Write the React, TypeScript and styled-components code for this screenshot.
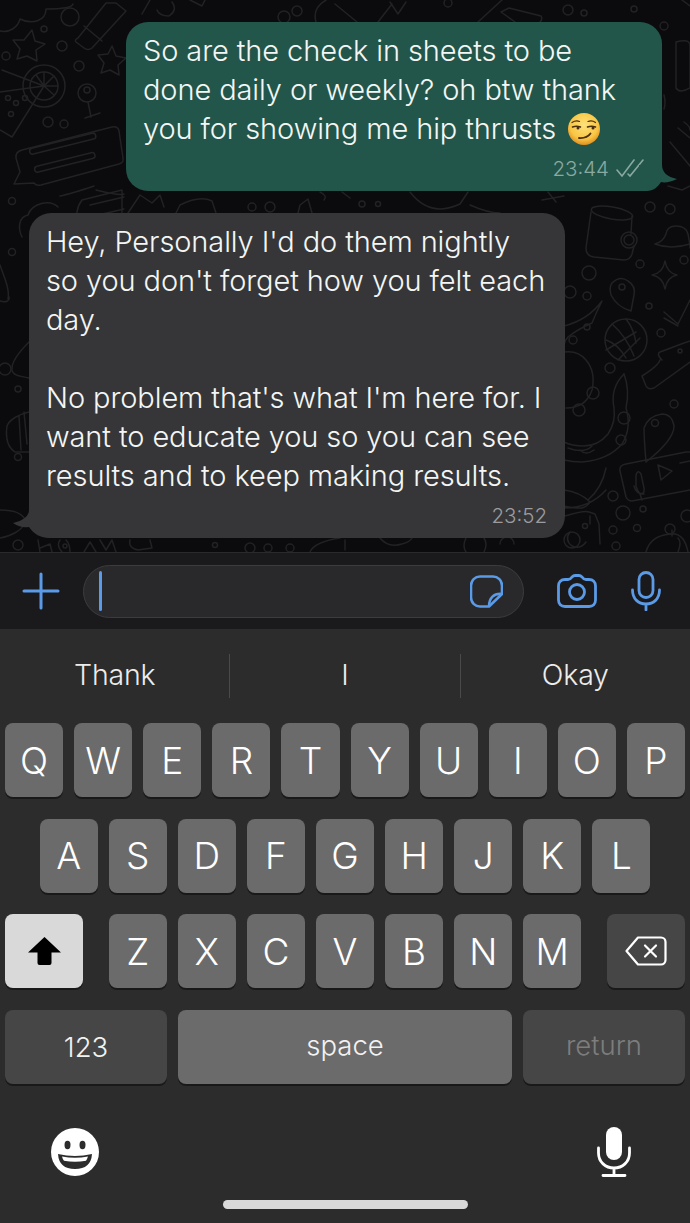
import React from 'react';
import styled, { createGlobalStyle } from 'styled-components';

const GlobalStyle = createGlobalStyle`
  html, body {
    margin: 0;
    padding: 0;
    background: #2c2c2c;
  }
`;

const ROWS = ['QWERTYUIOP', 'ASDFGHJKL', 'ZXCVBNM'];

const Wallpaper = () => (
  <WallpaperSvg viewBox="0 0 690 552">
    <g fill="none" stroke="#222224" strokeWidth="1.5" strokeLinecap="round" strokeLinejoin="round">
      {/* left column */}
      <path d="M0 31c10 2 18-4 20-12 12 6 26 2 26-10 12 0 26-1 27-5" />
      <circle cx="70" cy="17" r="9" />
      <circle cx="44" cy="29" r="3" />
      <circle cx="62" cy="46" r="5" />
      <circle cx="6" cy="56" r="4" />
      <circle cx="79" cy="66" r="5" />
      <path d="M32 30l3 11 10 3-9 6 1 11-10-5-10 3 3-10-7-9 11 0z" />
      <circle cx="44" cy="86" r="21" />
      <circle cx="44" cy="86" r="14" />
      <path d="M44 86V72M44 86l10-10M44 86h14M44 86l10 9M44 86l-8-11" />
      <path d="M2 70l42 16-32 51-12-7M0 92l44-6" />
      <circle cx="8" cy="98" r="2.5" />
      <circle cx="16" cy="103" r="2.5" />
      <circle cx="25" cy="98" r="2.5" />
      <circle cx="11" cy="114" r="2.5" />
      <circle cx="87" cy="93" r="9" />
      <circle cx="87" cy="90" r="3" />
      <path d="M88 102l3 15M85 118l15-5" />
      <circle cx="48" cy="122" r="5" />
      <circle cx="64" cy="124" r="4" />
      <path d="M22 150l90-23q6-1 7 4l4 27q1 5-4 6l-78 21q-5 1-7-2l-20 1 6-12-4-14q-1-6 6-8z" />
      <rect x="29" y="149" width="68" height="6" rx="3" transform="rotate(-14 29 149)" />
      <rect x="34" y="167" width="62" height="6" rx="3" transform="rotate(-14 34 167)" />
      <path d="M78 38l28-35h10l10 8-34 37q-4 3-8 0l-8-6q-2-2 2-4zM84 26l18 15" />
      <path d="M112 46l4 10 10 2-8 7 1 10-9-5-9 3 3-10-6-8 10-1z" />
      <path d="M82 200l40-10v28l-44 10q-4-18 4-28zM90 205l34-8M94 216l30-7" />
      <circle cx="12" cy="201" r="3.5" />
      <path d="M28 215c-10 2-10 14-6 22M28 215c4-12 22-16 30-8" />
      <circle cx="12" cy="252" r="3.5" />
      <path d="M0 265c4 12 10 24 8 34M0 301c6 2 10 0 9-4" />
      <circle cx="5" cy="369" r="6" />
      <circle cx="18" cy="389" r="3" />
      <path d="M29 342c-10 10-18 20-17 28 1 5 6 6 17 8" />
      <path d="M29 412c-10 2-20 8-22 14-2 14 2 22 8 26h14M24 412l3 32M19 416l2 34" />
      <circle cx="18" cy="457" r="3.5" />
      <path d="M0 510c14 0 24 4 26 12-4 8-14 14-26 16" />
      <circle cx="18" cy="545" r="5" />

      {/* top band */}
      <path d="M150 0l-8 14M172 2q6 8-3 14-10 0-12-6M190 0l12 6 3-6" />
      <circle cx="284" cy="17" r="6" />
      <circle cx="297" cy="11" r="5" />
      <path d="M316 22q-4-14 10-22M335 4l22 18" />
      <path d="M378 22l14-18M390 2l8 12 8-12" />
      <circle cx="448" cy="3" r="4" />
      <path d="M478 22l24-22M515 22l-14-10 8-4 32 8q2 3-1 6" />
      <circle cx="568" cy="10" r="5" />
      <circle cx="584" cy="13" r="3" />
      <circle cx="634" cy="9" r="3" />
      <circle cx="664" cy="26" r="4" />
      <path d="M682 0l8 6" />

      {/* right of outgoing bubble */}
      <path d="M676 42q14-4 14 4v42q-10 6-14 0z" />
      <path d="M664 95q2 8 0 14" />
      <path d="M678 128l12 10M684 122q6 4 6 8M670 142l20 24" />
      <path d="M668 186l14 4 8-4" />

      {/* gap between bubbles */}
      <path d="M128 213l12-18 12 8 8-8 4 12M176 213l4-8q20-10 32-4l4 12" />
      <circle cx="252" cy="207" r="4" />
      <circle cx="270" cy="207" r="5" />
      <path d="M298 213l2-8 8-6 4 14M320 192q8 4 4 8M342 192l8 6" />
      <circle cx="362" cy="204" r="3" />
      <circle cx="378" cy="204" r="2.5" />
      <path d="M410 192q20 26 50 12l8-12M470 205q18 8 30 8" />
      <path d="M542 200l22-4M548 192l8 10" />
      <path d="M96 190q24 6 28 4M60 196q10-2 34-10" />

      {/* right column */}
      <ellipse cx="612" cy="213" rx="21" ry="6" transform="rotate(10 612 213)" />
      <path d="M591 212l-5 36q0 8 8 9l30 3q6 0 8-6l2-8M632 216l-1 18" />
      <circle cx="629" cy="240" r="8" />
      <circle cx="629" cy="240" r="5" />
      <circle cx="650" cy="207" r="5" />
      <path d="M655 244q8-2 11-10 1-8 10-8 10 0 12 8 2 10 2 14M655 244q16 6 35 0" />
      <circle cx="670" cy="209" r="5" />
      <circle cx="640" cy="264" r="4" />
      <circle cx="684" cy="260" r="4" />
      <path d="M665 261q2 12 12 14-10 2-12 14-2-12-13-14 11-2 13-14z" />
      <circle cx="589" cy="273" r="7" />
      <path d="M612 283q8-8 16-2 8 5 6 14l-3 16q-14-4-20-16-2-8 1-12z" />
      <circle cx="622" cy="287" r="3" />
      <circle cx="570" cy="292" r="6" />
      <circle cx="587" cy="296" r="4" />
      <circle cx="649" cy="306" r="3" />
      <path d="M664 312l14 12 12-24M664 318l14 8" />
      <path d="M564 326q24-6 38-25-6 12-10 22-14 6-24 14-6 6-4 20" />
      <circle cx="587" cy="327" r="3" />
      <circle cx="573" cy="340" r="4" />
      <circle cx="626" cy="340" r="21" />
      <path d="M612 324q14 12 22 32M626 319q8 10 10 24M606 340q12 4 20 18M618 360l22-22M606 350l30-18" />
      <circle cx="661" cy="333" r="4" />
      <circle cx="610" cy="368" r="5" />
      <path d="M662 360q-6-6-2-8l24-9 6-2M660 360q-2 6-18 16l4 10q2 4 8 2l36-26" />
      <circle cx="680" cy="351" r="2" />
      <path d="M564 352q14-2 22 8 10 12 6 30-6 18-26 18" />
      <path d="M624 374q-14 14-10 34 2 14-6 26-10 12-24 12-12 0-20-4" />
      <path d="M624 374q6 16 2 34 6 20-4 36-14 16-40 18-10 0-18-2" />
      <circle cx="593" cy="393" r="6" />
      <circle cx="579" cy="410" r="6" />
      <circle cx="624" cy="418" r="6" />
      <circle cx="674" cy="404" r="4" />
      <circle cx="621" cy="440" r="5" />
      <path d="M568 448q16 6 24-2M594 450q-8 6-14 0" />
      <path d="M644 428q4-12 18-14 10 0 12 12 0 14-28 36-2-24-2-34z" />
      <circle cx="655" cy="423" r="3.5" />
      <path d="M626 464l60-12q4 0 4 0M690 490l-58 11q-4 0-6-4l-6-26q-1-6 6-7" />
      <path d="M636 475q2-6 5-1l3 14q1 6-4 6-3-4-4-8zM634 486q2 8 10 8M640 494l2 6M658 465l14 6-11 9zM680 463l10-2" />
      <path d="M564 490q16 2 26 12-2 4-8 6-12 0-18-2M564 508q26 0 42-18M606 468q-4 20-18 32" />
      <circle cx="613" cy="496" r="5" />
      <circle cx="623" cy="513" r="7" />
      <circle cx="643" cy="509" r="3" />
      <circle cx="687" cy="516" r="6" />
      <circle cx="613" cy="530" r="4" />
      <circle cx="637" cy="528" r="3.5" />
      <circle cx="616" cy="546" r="4" />
      <path d="M565 516q20-6 24-4l6 2 4 10 1 20M570 532q-6 8 2 14 8 4 14-4M590 516v8" />
      <circle cx="572" cy="540" r="8" />
      <circle cx="585" cy="526" r="2.5" />
      <path d="M646 552q4-16 24-18 14-2 18 18M672 530v6M678 552q4-10 0-14" />
      <circle cx="670" cy="529" r="5" />

      {/* bottom band */}
      <path d="M38 540l2 12M40 548l10-4 2 8M60 540q-4 6 2 12M66 540q4 4 4 12" />
      <circle cx="65" cy="546" r="2" />
      <path d="M84 552l6-10 6 10M100 540l6 10 6-10 4 12M130 540q-2 8 8 10l14-2-2-8" />
      <circle cx="215" cy="545" r="2.5" />
      <circle cx="250" cy="548" r="5" />
      <circle cx="268" cy="548" r="4" />
      <circle cx="290" cy="548" r="4" />
      <path d="M310 552q4-10 30-14M345 540v10M380 538q8 10 22 6 8-2 10-6" />
      <path d="M466 552q-4-6 0-14M484 552q4-8 0-14M500 544a7 7 0 0 1 14 0" />
    </g>
  </WallpaperSvg>
);

const SmirkEmoji = () => (
  <EmojiSvg viewBox="0 0 32 32">
    <defs>
      <radialGradient id="smirkFace" cx="50%" cy="38%" r="62%">
        <stop offset="0%" stopColor="#fde27a" />
        <stop offset="70%" stopColor="#f9c645" />
        <stop offset="100%" stopColor="#e08f1e" />
      </radialGradient>
    </defs>
    <circle cx="16" cy="16" r="16" fill="url(#smirkFace)" />
    <g fill="none" stroke="#4a2f10" strokeLinecap="round">
      <path d="M4 9.500q4-2.500 7.500-1M20 8.500q4-1.500 7.500 1" strokeWidth="1.200" />
      <path d="M4.500 14q4-1.500 8 0M19.500 14q4-1.500 8 0" strokeWidth="1.500" />
      <path d="M11 25q8 .5 11.500-4.500" strokeWidth="1.800" />
    </g>
    <circle cx="10" cy="15" r="1.500" fill="#4a2f10" />
    <circle cx="25" cy="15" r="1.500" fill="#4a2f10" />
  </EmojiSvg>
);

const App: React.FC = () => {
  return (
    <Page>
      <GlobalStyle />
      <Chat>
        <Wallpaper />
        <Bubble $mine>
          <Text>
            So are the check in sheets to be
            <br />
            done daily or weekly? oh btw thank
            <br />
            you for showing me hip thrusts <SmirkEmoji />
          </Text>
          <Meta>
            <Time $mine>23:44</Time>
            <svg width="28" height="20" viewBox="0 0 28 20" fill="none" stroke="#8aa9a0" strokeWidth="1.6" strokeLinecap="round">
              <path d="M1 12l5 6L18 2M12 16l2 2L27 2" />
            </svg>
          </Meta>
          <Tail $mine width="40" height="26" viewBox="0 0 40 26">
            <path d="M23 0C23 7 28 12 38 14 32 17 26 18 22 17 19 22 14 26 8 26H0V0z" fill="#22564a" />
          </Tail>
        </Bubble>
        <Bubble>
          <Text>
            Hey, Personally I'd do them nightly
            <br />
            so you don't forget how you felt each
            <br />
            day.
            <br />
            <br />
            No problem that's what I'm here for. I
            <br />
            want to educate you so you can see
            <br />
            results and to keep making results.
          </Text>
          <Meta>
            <Time>23:52</Time>
          </Meta>
          <Tail width="40" height="28" viewBox="0 0 40 28">
            <path d="M19 0C19 6 13 11 3 13 9 17 14 18 19 17 24 24 30 28 40 28V0z" fill="#363638" />
          </Tail>
        </Bubble>
      </Chat>

      <InputBar>
        <svg width="38" height="38" viewBox="0 0 38 38" fill="none" stroke="#5a9ae6" strokeWidth="3" strokeLinecap="round">
          <path d="M19 2v34M2 19h34" />
        </svg>
        <Field>
          <Caret />
          <svg width="33" height="33" viewBox="0 0 33 33" fill="none" stroke="#5a9ae6" strokeWidth="2.6" strokeLinejoin="round">
            <path d="M10 1.500h13a9 9 0 0 1 9 9V19L19 31.500H10a9 9 0 0 1-9-9v-12a9 9 0 0 1 9-9z" />
            <path d="M32 19c-8-1-13 4-13 12.500" />
          </svg>
        </Field>
        <CameraIcon width="40" height="34" viewBox="0 0 40 34" fill="none" stroke="#5a9ae6" strokeWidth="2.8" strokeLinejoin="round">
          <path d="M8 5.500h3c2 0 3-1 4-2.500 1-1 2-1.500 3-1.500h4c1 0 2 .5 3 1.500 1 1.500 2 2.500 4 2.500h3c4 0 6.500 2.500 6.500 6.500v14c0 4-2.500 6.500-6.500 6.500H8c-4 0-6.500-2.500-6.500-6.500V12C1.500 8 4 5.500 8 5.500z" />
          <circle cx="20" cy="18" r="7.500" />
        </CameraIcon>
        <svg width="30" height="40" viewBox="0 0 30 40" fill="none" stroke="#5a9ae6" strokeWidth="2.8" strokeLinecap="round">
          <rect x="8" y="1.500" width="14" height="25" rx="7" />
          <path d="M1.500 19c0 9 6 14 13.500 14s13.500-5 13.500-14M15 33v6" />
        </svg>
      </InputBar>

      <Keyboard>
        <Suggestions>
          <Suggestion>Thank</Suggestion>
          <Suggestion>I</Suggestion>
          <Suggestion>Okay</Suggestion>
        </Suggestions>
        <Keys>
          <KeyRow>
            {ROWS[0].split('').map((k) => (
              <LetterKey key={k}>{k}</LetterKey>
            ))}
          </KeyRow>
          <KeyRow>
            {ROWS[1].split('').map((k) => (
              <LetterKey key={k}>{k}</LetterKey>
            ))}
          </KeyRow>
          <ShiftRow>
            <ActionKey $light>
              <svg width="33" height="28" viewBox="0 0 33 28">
                <path d="M16.500 0L33 15.500H23.500V26q0 2-2 2h-10q-2 0-2-2V15.500H0z" fill="#000" />
              </svg>
            </ActionKey>
            <MiddleKeys>
              {ROWS[2].split('').map((k) => (
                <LetterKey key={k}>{k}</LetterKey>
              ))}
            </MiddleKeys>
            <ActionKey>
              <svg width="42" height="30" viewBox="0 0 42 30" fill="none" stroke="#fff" strokeWidth="2.2" strokeLinejoin="round" strokeLinecap="round">
                <path d="M13 1.500h23a4.500 4.500 0 0 1 4.500 4.500v18a4.500 4.500 0 0 1-4.500 4.500H13L1.500 15z" />
                <path d="M20 9.500l11 11M31 9.500l-11 11" />
              </svg>
            </ActionKey>
          </ShiftRow>
          <BottomRow>
            <WordKey $width={162}>123</WordKey>
            <WordKey $width={334} $bright>
              <WordLabel>space</WordLabel>
            </WordKey>
            <WordKey $width={162} $muted>
              <WordLabel>return</WordLabel>
            </WordKey>
          </BottomRow>
        </Keys>
        <Footer>
          <svg width="48" height="48" viewBox="0 0 48 48">
            <circle cx="24" cy="24" r="24" fill="#fff" />
            <ellipse cx="16.500" cy="17" rx="3" ry="4.200" fill="#2c2c2c" />
            <ellipse cx="31.500" cy="17" rx="3" ry="4.200" fill="#2c2c2c" />
            <path d="M7 26q17 4 34 0-1 15-17 15T7 26z" fill="#2c2c2c" />
            <path d="M11 28.500q13 2.500 26 0-1 3-2 4.200-11 2-22 0-1.500-1.700-2-4.200z" fill="#fff" />
          </svg>
          <svg width="34" height="50" viewBox="0 0 34 50" fill="none">
            <rect x="9" y="0" width="16" height="33" rx="8" fill="#fff" />
            <path d="M1.500 21v5c0 9 7 15 15.500 15s15.500-6 15.500-15v-5M17 41v7M6 48.500h22" stroke="#fff" strokeWidth="2.800" strokeLinecap="round" />
          </svg>
        </Footer>
        <HomeIndicator />
      </Keyboard>
    </Page>
  );
};

const Page = styled.div`
  display: flex;
  flex-direction: column;
  width: 690px;
  height: 1223px;
  overflow: hidden;
  font-family: Inter, 'Liberation Sans', sans-serif;
`;

const Chat = styled.div`
  position: relative;
  display: flex;
  flex-direction: column;
  gap: 22px;
  height: 552px;
  box-sizing: border-box;
  padding: 22px 28px 0 29px;
  background: #0b0b0d;
`;

const WallpaperSvg = styled.svg`
  position: absolute;
  inset: 0;
  width: 690px;
  height: 552px;
`;

const Bubble = styled.div<{ $mine?: boolean }>`
  position: relative;
  width: 536px;
  box-sizing: border-box;
  padding: 9px 18px 3px 17px;
  align-self: ${(p) => (p.$mine ? 'flex-end' : 'flex-start')};
  background: ${(p) => (p.$mine ? '#22564a' : '#363638')};
  border-radius: 22px;
`;

const Text = styled.div`
  font-size: 29px;
  font-weight: 350;
  line-height: 39px;
  letter-spacing: -0.1px;
  color: #f4f6f5;
  white-space: nowrap;
`;

const EmojiSvg = styled.svg`
  width: 32px;
  height: 32px;
  margin-left: 4px;
  vertical-align: -6px;
`;

const Meta = styled.div`
  display: flex;
  justify-content: flex-end;
  align-items: center;
  gap: 7px;
  height: 40px;
`;

const Time = styled.span<{ $mine?: boolean }>`
  font-size: 20.5px;
  font-weight: 350;
  color: ${(p) => (p.$mine ? '#8aa9a0' : '#9c9c9e')};
`;

const Tail = styled.svg<{ $mine?: boolean }>`
  position: absolute;
  bottom: 0;
  ${(p) => (p.$mine ? 'right: -17px;' : 'left: -19px;')}
`;

const InputBar = styled.div`
  display: flex;
  align-items: center;
  height: 77px;
  box-sizing: border-box;
  padding-left: 22px;
  background: #1a1a1c;
  border-top: 1px solid #2a2a2c;
`;

const Field = styled.div`
  display: flex;
  align-items: center;
  justify-content: space-between;
  width: 441px;
  height: 53px;
  box-sizing: border-box;
  margin-left: 23px;
  padding: 0 20px 0 15px;
  background: #29292b;
  border: 1px solid #3c3c3e;
  border-radius: 27px;
`;

const Caret = styled.div`
  width: 3px;
  height: 40px;
  background: #5a9ae6;
  border-radius: 2px;
`;

const CameraIcon = styled.svg`
  margin: 0 34px 0 33px;
`;

const Keyboard = styled.div`
  display: flex;
  flex-direction: column;
  flex: 1;
  background: #2c2c2c;
`;

const Suggestions = styled.div`
  display: flex;
  align-items: center;
  height: 94px;
`;

const Suggestion = styled.div`
  flex: 1;
  height: 44px;
  line-height: 42px;
  text-align: center;
  font-size: 28.5px;
  font-weight: 350;
  letter-spacing: -0.2px;
  color: #ececec;
  border-left: 1px solid #4a4a4a;

  &:first-child {
    border-left: 0;
  }
`;

const Keys = styled.div`
  display: flex;
  flex-direction: column;
  gap: 21.7px;
  padding: 0 5px;
`;

const KeyRow = styled.div`
  display: flex;
  justify-content: center;
  gap: 11px;
`;

const LetterKey = styled.div`
  display: flex;
  align-items: center;
  justify-content: center;
  width: 58.1px;
  height: 74px;
  font-size: 37px;
  font-weight: 350;
  color: #fff;
  background: #6b6b6b;
  border-radius: 8px;
  box-shadow: 0 2px 0 #191919;
`;

const ShiftRow = styled.div`
  display: flex;
  justify-content: space-between;
`;

const MiddleKeys = styled.div`
  display: flex;
  gap: 11px;
`;

const ActionKey = styled.div<{ $light?: boolean }>`
  display: flex;
  align-items: center;
  justify-content: center;
  width: 78px;
  height: 74px;
  background: ${(p) => (p.$light ? '#d9d9d9' : '#464646')};
  border-radius: 8px;
  box-shadow: 0 2px 0 #191919;
`;

const BottomRow = styled.div`
  display: flex;
  gap: 11px;
`;

const WordKey = styled.div<{ $width: number; $bright?: boolean; $muted?: boolean }>`
  display: flex;
  align-items: center;
  justify-content: center;
  width: ${(p) => p.$width}px;
  height: 74px;
  font-size: 27.5px;
  font-weight: 350;
  color: ${(p) => (p.$muted ? '#7d7d7d' : '#f2f2f2')};
  background: ${(p) => (p.$bright ? '#6b6b6b' : '#464646')};
  border-radius: 8px;
  box-shadow: 0 2px 0 #191919;
`;

const WordLabel = styled.span`
  margin-bottom: 4px;
`;

const Footer = styled.div`
  display: flex;
  justify-content: space-between;
  align-items: center;
  height: 50px;
  margin-top: 43px;
  padding: 0 59px 0 51px;
`;

const HomeIndicator = styled.div`
  width: 245px;
  height: 9px;
  margin: 23px auto 0;
  background: #d9d9d9;
  border-radius: 5px;
`;

export default App;
